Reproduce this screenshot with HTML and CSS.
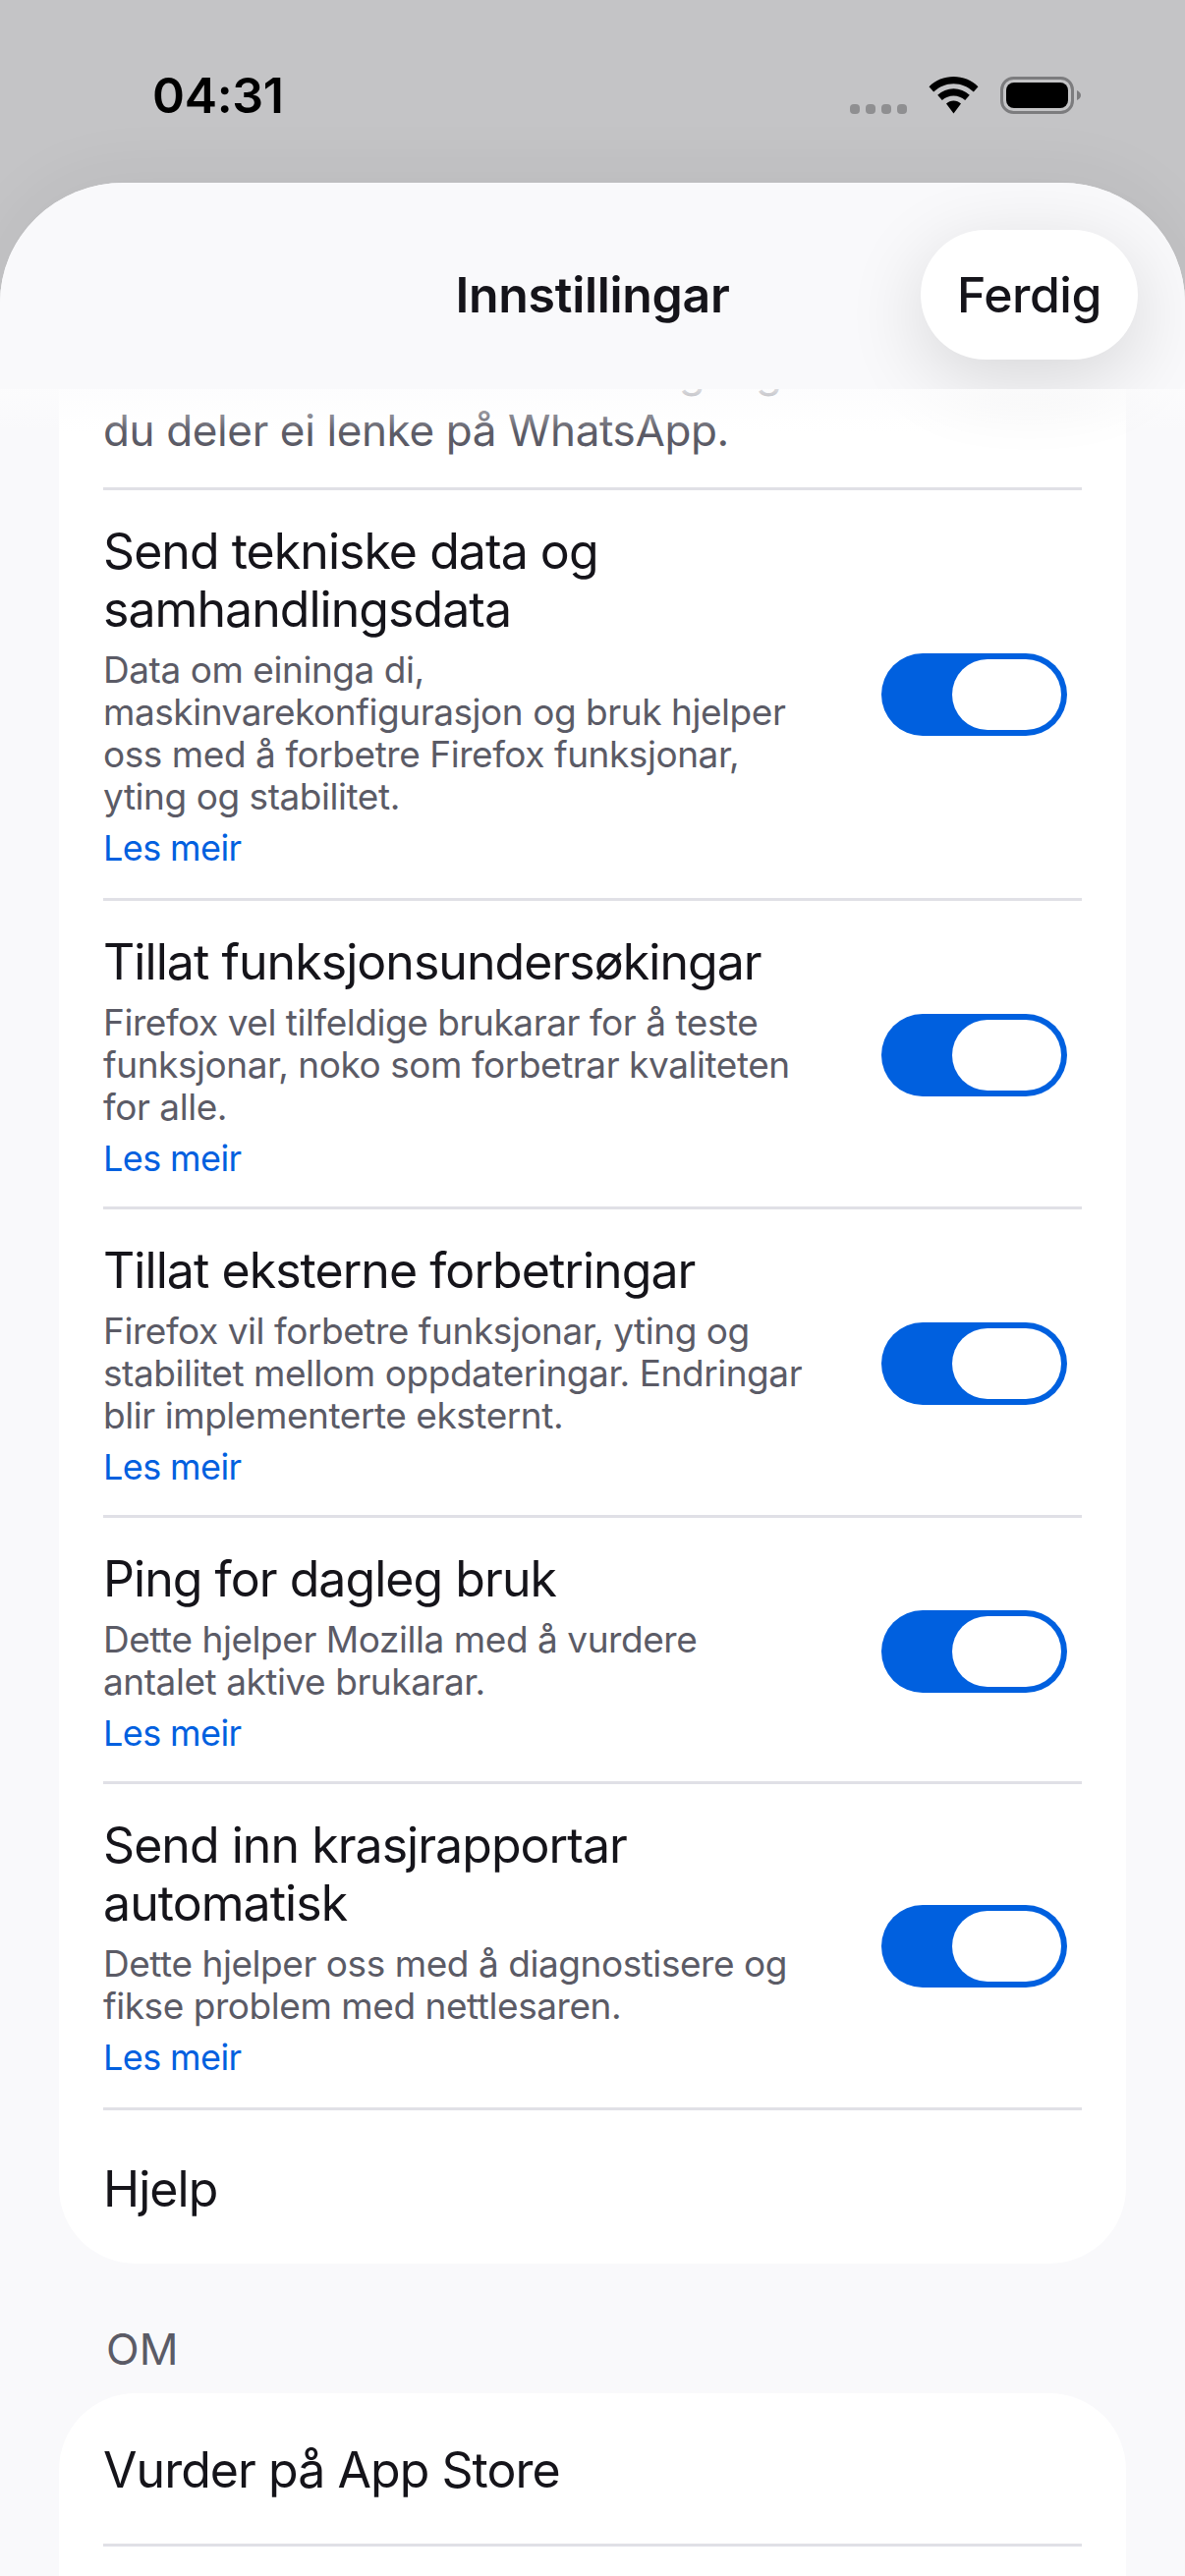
FILE: index.html
```html
<!DOCTYPE html>
<html lang="nn">
<head>
<meta charset="utf-8">
<title>Innstillingar</title>
<link rel="stylesheet" href="styles.css">
</head>
<body>
<div class="phone">
  <div class="status">
    <span class="clock">04:31</span>
    <div class="status-icons">
      <div class="signal"><i></i><i></i><i></i><i></i></div>
      <svg class="wifi" viewBox="0 0 51 38" width="51" height="38" aria-hidden="true">
        <path d="M25.5 0C35 0 43.7 3.6 50.5 10.2L45.8 15.6C40.2 10.3 33.2 7.3 25.5 7.3C17.8 7.3 10.8 10.3 5.2 15.6L0.5 10.2C7.3 3.6 16 0 25.5 0Z"/>
        <path d="M25.5 12.3C31.6 12.3 37.2 14.6 41.8 18.8L37.2 24.1C33.8 21.2 29.8 19.6 25.5 19.6C21.2 19.6 17.2 21.2 13.8 24.1L9.2 18.8C13.8 14.6 19.4 12.3 25.5 12.3Z"/>
        <path d="M25.5 24.6C28.3 24.6 30.9 25.6 33 27.6L25.5 37.5L18 27.6C20.1 25.6 22.7 24.6 25.5 24.6Z"/>
      </svg>
      <svg class="battery" viewBox="0 0 82 38" width="82" height="38" aria-hidden="true">
        <rect x="1.5" y="1.5" width="72" height="35" rx="12" fill="none" stroke="#7c7c7e" stroke-width="3"/>
        <rect x="6" y="6" width="63" height="26" rx="8"/>
        <path d="M78 14C80.5 15 82 17 82 19C82 21 80.5 23 78 24Z" fill="#7c7c7e"/>
      </svg>
    </div>
  </div>

  <main class="sheet">
    <header class="bar">
      <h1 class="bar-title">Innstillingar</h1>
      <button class="done" type="button">Ferdig</button>
    </header>

    <div class="scroll">
      <section class="card card-first">
        <div class="row row-intro">
          <p class="intro">Fortel andre om Firefox kvar gong<br>du deler ei lenke på WhatsApp.</p>
        </div>

        <div class="row row-wrapped">
          <div class="row-text">
            <h2 class="row-title">Send tekniske data og<br>samhandlingsdata</h2>
            <p class="row-sub">Data om eininga di,<br>maskinvarekonfigurasjon og bruk hjelper<br>oss med å forbetre Firefox funksjonar,<br>yting og stabilitet.</p>
            <a class="more">Les meir</a>
          </div>
          <div class="toggle"><span class="thumb"></span></div>
        </div>

        <div class="row">
          <div class="row-text">
            <h2 class="row-title">Tillat funksjonsundersøkingar</h2>
            <p class="row-sub">Firefox vel tilfeldige brukarar for å teste<br>funksjonar, noko som forbetrar kvaliteten<br>for alle.</p>
            <a class="more">Les meir</a>
          </div>
          <div class="toggle"><span class="thumb"></span></div>
        </div>

        <div class="row">
          <div class="row-text">
            <h2 class="row-title">Tillat eksterne forbetringar</h2>
            <p class="row-sub">Firefox vil forbetre funksjonar, yting og<br>stabilitet mellom oppdateringar. Endringar<br>blir implementerte eksternt.</p>
            <a class="more">Les meir</a>
          </div>
          <div class="toggle"><span class="thumb"></span></div>
        </div>

        <div class="row">
          <div class="row-text">
            <h2 class="row-title">Ping for dagleg bruk</h2>
            <p class="row-sub">Dette hjelper Mozilla med å vurdere<br>antalet aktive brukarar.</p>
            <a class="more">Les meir</a>
          </div>
          <div class="toggle"><span class="thumb"></span></div>
        </div>

        <div class="row row-wrapped">
          <div class="row-text">
            <h2 class="row-title">Send inn krasjrapportar<br>automatisk</h2>
            <p class="row-sub">Dette hjelper oss med å diagnostisere og<br>fikse problem med nettlesaren.</p>
            <a class="more">Les meir</a>
          </div>
          <div class="toggle"><span class="thumb"></span></div>
        </div>

        <div class="row row-plain row-last">
          <span class="row-title">Hjelp</span>
        </div>
      </section>

      <h3 class="section-label">OM</h3>

      <section class="card card-open">
        <div class="row row-plain">
          <span class="row-title">Vurder på App Store</span>
        </div>
      </section>
    </div>
  </main>
</div>
</body>
</html>
```

FILE: styles.css
```css
* { box-sizing: border-box; }

html, body {
  margin: 0;
  padding: 0;
}

body {
  background: #c4c4c6;
  font-family: "Inter", "Liberation Sans", sans-serif;
  color: #15141a;
}

.phone {
  width: 1206px;
  height: 2622px;
  display: flex;
  flex-direction: column;
  overflow: hidden;
}

/* Status bar */
.status {
  height: 186px;
  flex: none;
  padding: 78px 106px 0 155px;
  display: flex;
  justify-content: space-between;
  align-items: flex-start;
}

.clock {
  font-size: 50px;
  font-weight: 600;
  line-height: 38px;
  letter-spacing: -0.3px;
  color: #000;
}

.status-icons {
  display: flex;
  align-items: flex-end;
  height: 38px;
}

.signal {
  display: flex;
  gap: 6px;
  margin-right: 22px;
}

.signal i {
  width: 10px;
  height: 10px;
  border-radius: 4px;
  background: #8f8f91;
}

.wifi { margin-right: 22px; }

/* Settings sheet */
.sheet {
  flex: 1;
  min-height: 0;
  display: flex;
  flex-direction: column;
  background: #f9f9fb;
  border-radius: 126px 126px 0 0 / 122px 122px 0 0;
  box-shadow: 0 -8px 70px rgba(0, 0, 0, 0.05);
}

.bar {
  position: relative;
  z-index: 2;
  flex: none;
  height: 210px;
  padding: 18px 48px 0;
  display: grid;
  grid-template-columns: 1fr auto 1fr;
  align-items: center;
  background: #f9f9fb;
  border-radius: 126px 126px 0 0 / 122px 122px 0 0;
}

.bar::after {
  content: "";
  position: absolute;
  z-index: 4;
  left: 0;
  right: 0;
  top: 100%;
  height: 44px;
  background: linear-gradient(to bottom, rgba(252, 252, 253, 0.8), rgba(252, 252, 253, 0));
  pointer-events: none;
}

.bar-title {
  grid-column: 2;
  margin: 0;
  font-size: 50px;
  font-weight: 600;
  letter-spacing: -0.3px;
}

.done {
  grid-column: 3;
  justify-self: end;
  width: 221px;
  height: 132px;
  border: 0;
  border-radius: 66px;
  background: #fff;
  color: #15141a;
  font: 500 50px "Inter", "Liberation Sans", sans-serif;
  letter-spacing: -0.5px;
  box-shadow: 0 20px 80px rgba(0, 0, 0, 0.14);
  position: relative;
  z-index: 3;
}

.scroll {
  flex: 1;
  min-height: 0;
  overflow: hidden;
  padding: 0 60px;
}

.card {
  background: #fff;
  border-radius: 78px;
  padding: 0 45px;
}

.card-first {
  border-radius: 0 0 78px 78px;
}

/* the section runs on past the bottom of the screen */
.card-open {
  padding-bottom: 120px;
}

.row {
  display: flex;
  align-items: center;
  justify-content: space-between;
  padding: 33px 15px 27px 0;
  border-bottom: 3px solid #e0e0e6;
}

.row-wrapped { padding-bottom: 29px; }

.row-intro {
  margin-top: -48px;
  padding: 0 0 28px;
}

.intro {
  margin: 0;
  font-size: 44px;
  line-height: 60px;
  letter-spacing: -0.37px;
  color: #5b5b66;
  white-space: nowrap;
}

.row-title {
  margin: 0;
  font-size: 50px;
  font-weight: 400;
  line-height: 59px;
  letter-spacing: -0.95px;
}

.row-sub {
  margin: 10px 0 10px;
  font-size: 37px;
  line-height: 43px;
  letter-spacing: -0.45px;
  color: #5b5b66;
}

.more {
  display: block;
  font-size: 36px;
  line-height: 43px;
  letter-spacing: -0.6px;
  color: #0060df;
}

.row-plain {
  padding: 4px 0 0;
  height: 156px;
}

.row-last { border-bottom: 0; }

.toggle {
  flex: none;
  width: 189px;
  height: 84px;
  margin-bottom: 3px;
  padding: 6px;
  border-radius: 42px;
  background: #0060df;
  display: flex;
  justify-content: flex-end;
}

.thumb {
  width: 111px;
  height: 72px;
  border-radius: 36px;
  background: #fff;
}

.section-label {
  margin: 60px 0 0 48px;
  height: 72px;
  font-size: 44px;
  font-weight: 400;
  line-height: 54px;
  color: #5b5b66;
}
```
